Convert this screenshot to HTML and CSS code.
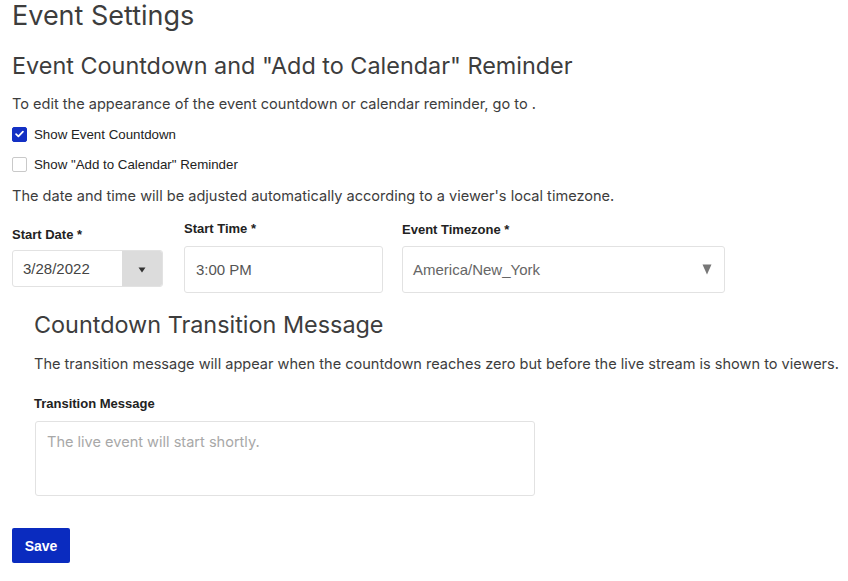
FILE: index.html
```html
<!DOCTYPE html>
<html>
<head>
<meta charset="utf-8">
<link rel="stylesheet" href="styles.css">
</head>
<body>
<div class="page">
  <h1 class="title">Event Settings</h1>
  <h2 class="section-title">Event Countdown and "Add to Calendar" Reminder</h2>
  <p class="text intro">To edit the appearance of the event countdown or calendar reminder, go to .</p>
  <label class="check">
    <span class="box checked"><svg viewBox="0 0 14 14" width="14" height="14"><path d="M3.3 7.2 L5.8 9.6 L10.7 4.4" fill="none" stroke="#fff" stroke-width="1.9" stroke-linecap="round" stroke-linejoin="round"/></svg></span>
    <span class="check-label">Show Event Countdown</span>
  </label>
  <label class="check">
    <span class="box"></span>
    <span class="check-label">Show "Add to Calendar" Reminder</span>
  </label>
  <p class="text note">The date and time will be adjusted automatically according to a viewer's local timezone.</p>

  <div class="fields">
    <div class="field date-field">
      <div class="label">Start Date *</div>
      <div class="date-input">
        <span class="date-value">3/28/2022</span>
        <span class="date-btn"><svg width="8" height="6" viewBox="0 0 8 6"><path d="M0.5 0.5 H7.5 L4 5.5 Z" fill="#333"/></svg></span>
      </div>
    </div>
    <div class="field time-field">
      <div class="label">Start Time *</div>
      <div class="input time-input">3:00 PM</div>
    </div>
    <div class="field tz-field">
      <div class="label">Event Timezone *</div>
      <div class="input tz-input">
        <span>America/New_York</span>
        <svg width="10" height="11" viewBox="0 0 10 11"><path d="M0.5 0.5 H9.5 L5 10.5 Z" fill="#777"/></svg>
      </div>
    </div>
  </div>

  <div class="sub">
    <h2 class="section-title">Countdown Transition Message</h2>
    <p class="text sub-text">The transition message will appear when the countdown reaches zero but before the live stream is shown to viewers.</p>
    <div class="label tm-label">Transition Message</div>
    <div class="textarea">The live event will start shortly.</div>
  </div>

  <button class="save">Save</button>
</div>
</body>
</html>
```

FILE: styles.css
```css
* { box-sizing: border-box; }
html, body { margin: 0; padding: 0; background: #fff; }
body { font-family: Inter, Roboto, sans-serif; color: #3a3a3a; }
.page { padding: 0 12px; }
.title {
  margin: 0;
  font-weight: 400;
  font-size: 27px;
  line-height: 31px;
  color: #3d3d3d;
}
.section-title {
  margin: 20px 0 0;
  font-weight: 400;
  font-size: 23.4px;
  line-height: 30px;
  color: #3d3d3d;
}
.text {
  margin: 0;
  font-size: 14.55px;
  line-height: 20px;
  color: #3d3d3d;
}
.intro { margin-top: 13px; }
.check {
  display: flex;
  align-items: center;
  gap: 7px;
  height: 16px;
  margin-top: 12px;
}
.check + .check { margin-top: 14px; }
.box {
  width: 15px;
  height: 15px;
  border: 1px solid #c9c9c9;
  border-radius: 2px;
  display: flex;
  align-items: center;
  justify-content: center;
  background: #fff;
}
.box.checked { background: #1330c4; border-color: #1330c4; }
.check-label {
  font-family: "Liberation Sans", Arial, sans-serif;
  font-size: 13.3px;
  color: #222;
}
.note { margin-top: 14px; }
.label {
  font-family: "Liberation Sans", Arial, sans-serif;
  font-weight: 700;
  font-size: 13px;
  line-height: 16px;
  color: #222;
}
.fields {
  display: flex;
  align-items: flex-start;
  margin-top: 15px;
}
.date-field { width: 151px; margin-top: 6px; }
.date-field .label { margin-bottom: 7px; }
.date-input {
  display: flex;
  height: 37px;
  border: 1px solid #e2e2e2;
  border-radius: 3px;
  overflow: hidden;
}
.date-value {
  flex: 1;
  display: flex;
  align-items: center;
  padding-left: 10px;
  font-family: "Liberation Sans", Arial, sans-serif;
  font-size: 15px;
  color: #444;
}
.date-btn {
  width: 40px;
  background: #dcdcdc;
  display: flex;
  align-items: center;
  justify-content: center;
  padding-top: 3px;
}
.time-field { width: 199px; margin-left: 21px; }
.time-field .label { margin-bottom: 9px; }
.input {
  height: 47px;
  border: 1px solid #e2e2e2;
  border-radius: 3px;
  display: flex;
  align-items: center;
  padding-left: 11px;
  font-family: "Liberation Sans", Arial, sans-serif;
  font-size: 15px;
  color: #555;
}
.tz-field { width: 323px; margin-left: 19px; margin-top: 1px; }
.tz-field .label { margin-bottom: 8px; }
.tz-input {
  justify-content: space-between;
  padding-left: 10px;
  padding-right: 12px;
  color: #666;
}
.sub { padding-left: 22px; margin-top: 17px; }
.sub .section-title { margin-top: 0; }
.sub-text { margin-top: 14px; white-space: nowrap; }
.tm-label { margin-top: 22px; }
.textarea {
  margin-top: 9px;
  margin-left: 1px;
  width: 500px;
  height: 75px;
  border: 1px solid #e2e2e2;
  border-radius: 3px;
  padding: 10px 11px;
  font-size: 14.55px;
  line-height: 20px;
  color: #a8a8a8;
}
.save {
  margin-top: 32px;
  width: 58px;
  height: 35px;
  border: none;
  border-radius: 2px;
  background: #0a2bbf;
  color: #fff;
  font-family: "Liberation Sans", Arial, sans-serif;
  font-weight: 700;
  font-size: 14px;
  padding: 0;
  display: block;
}
```
